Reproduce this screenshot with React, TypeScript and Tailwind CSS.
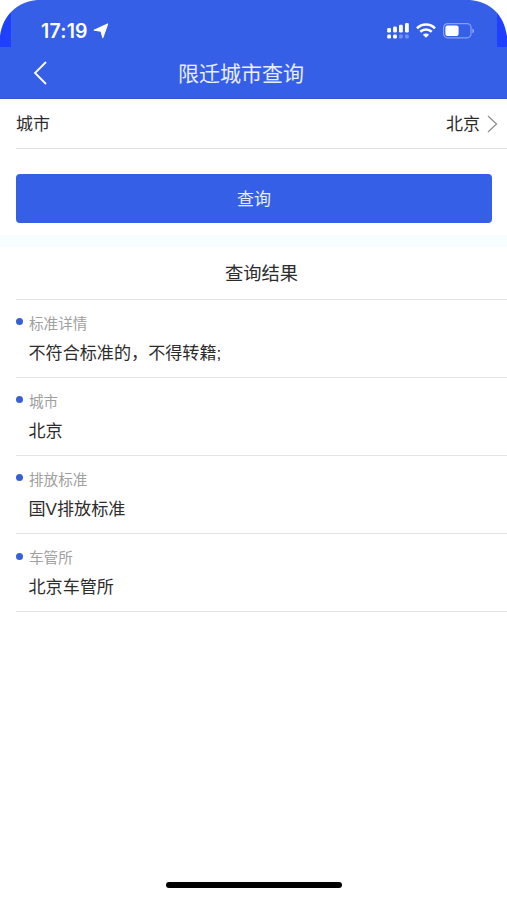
import React from 'react';

type Item = {
  label: string;
  value: string;
};

const results: Item[] = [
  { label: '标准详情', value: '不符合标准的，不得转籍;' },
  { label: '城市', value: '北京' },
  { label: '排放标准', value: '国V排放标准' },
  { label: '车管所', value: '北京车管所' },
];

function SignalIcon() {
  return (
    <svg width="22" height="16" viewBox="0 0 22 16" fill="white">
      <rect x="0.2" y="4.9" width="3.8" height="4.6" rx="1.3" />
      <rect x="6.1" y="3.6" width="3.8" height="5.9" rx="1.3" />
      <rect x="12" y="1.8" width="3.8" height="7.7" rx="1.3" />
      <rect x="18" y="0" width="3.8" height="9.5" rx="1.3" />
      <rect x="0.2" y="11.6" width="3.8" height="4" rx="1.3" />
      <rect x="6.1" y="11.6" width="3.8" height="4" rx="1.3" />
      <rect x="12" y="11.6" width="3.8" height="4" rx="1.3" opacity="0.3" />
      <rect x="18" y="11.6" width="3.8" height="4" rx="1.3" opacity="0.3" />
    </svg>
  );
}

function WifiIcon() {
  return (
    <svg width="20" height="15" viewBox="0 0 20 15" fill="none" stroke="white" strokeWidth="2.6">
      <path d="M1 5.3C6 .3 14 .3 19 5.3" />
      <path d="M4.3 8.8c3.2-3 8.2-3 11.4 0" />
      <path d="M10 14.8 6.9 11.7c1.8-1.6 4.4-1.6 6.2 0z" fill="white" stroke="none" />
    </svg>
  );
}

function BatteryIcon() {
  return (
    <svg width="32" height="16" viewBox="0 0 32 16">
      <rect x="0.6" y="0.6" width="27.4" height="14.2" rx="4" fill="none" stroke="white" strokeOpacity="0.4" strokeWidth="1.2" />
      <rect x="2.4" y="2.5" width="13.2" height="10.4" rx="2" fill="white" />
      <path d="M29.4 5.4c2.2.8 2.2 4 0 4.8z" fill="white" fillOpacity="0.45" />
    </svg>
  );
}

function Header() {
  return (
    <header className="relative h-[99px] shrink-0 border-b border-[#3153cf] bg-[#365fe8]">
      <svg className="absolute inset-0" width="507" height="47" viewBox="0 0 507 47">
        <path d="M0 0h11v47H0zM497 0h10v47h-10z" fill="#2040ff" />
        <path d="M0 0h37C17 2 3 15 0 36zM507 0h-37c21 2 34 15 37 36z" fill="white" />
      </svg>
      <div className="relative flex h-[47px] items-start justify-between pl-[41px] pr-[32px] text-white">
        <div className="flex items-center gap-[5px] pt-[19px]">
          <span className="font-['Inter'] text-[19.5px] leading-6 font-semibold tracking-[0.2px]">17:19</span>
          <svg
            width="16"
            height="16"
            viewBox="0 0 16 16"
            fill="white"
            stroke="white"
            strokeWidth="1.2"
            strokeLinejoin="round"
          >
            <path d="M14.6 1 9.8 14.6 8.1 8.2 1.2 7.2z" />
          </svg>
        </div>
        <div className="flex items-start pt-[22.5px]">
          <SignalIcon />
          <span className="ml-[7px]">
            <WifiIcon />
          </span>
          <span className="ml-[7px]">
            <BatteryIcon />
          </span>
        </div>
      </div>
      <div className="relative flex h-[51px] items-center">
        <button className="ml-[33px] w-[15px]">
          <svg width="15" height="24" viewBox="0 0 15 24" fill="none" stroke="white" strokeWidth="1.8">
            <path d="M13 1 2 12l11 11" />
          </svg>
        </button>
        <h1 className="ml-[130px] pt-[2px] text-[21px] leading-[30px] text-[#e8edff]">限迁城市查询</h1>
      </div>
    </header>
  );
}

export default function App() {
  return (
    <div className="flex h-[900px] w-[507px] flex-col overflow-hidden bg-white font-['Liberation_Sans','Noto_Sans_CJK_SC',sans-serif] text-[#2c2c2c]">
      <Header />
      <div className="ml-4 flex h-[50px] shrink-0 items-center justify-between border-b border-[#e0e0e0] pr-[9px] text-[17px]">
        <span className="pt-[3px]">城市</span>
        <div className="flex items-center gap-[7px]">
          <span className="pt-[3px]">北京</span>
          <svg width="11" height="18" viewBox="0 0 11 18" fill="none" stroke="#8c8c8c" strokeWidth="1.2">
            <path d="M1 1l8.5 8L1 17" />
          </svg>
        </div>
      </div>
      <button className="mt-[25px] mr-[15px] ml-4 h-[49px] shrink-0 rounded-[4px] bg-[#365fe8] pt-[2px] text-[17px] text-[#e8edff]">
        查询
      </button>
      <div className="mt-3 h-3 shrink-0 bg-[#f8fdff]" />
      <h2 className="ml-4 flex h-[52.5px] shrink-0 items-center justify-center border-b border-[#e4e4e4] pt-[2px] text-[18.3px]">
        查询结果
      </h2>
      <ul className="ml-4">
        {results.map((item) => (
          <li key={item.label} className="h-[78.2px] border-b border-[#e4e4e4] pt-[13px]">
            <div className="flex items-center text-[14.6px] leading-[22px] text-[#a0a0a0]">
              <span className="mr-[6px] mb-1 size-[7px] rounded-full bg-[#365fda]" />
              {item.label}
            </div>
            <div className="mt-[5px] pl-[12.5px] text-[17.1px] leading-7">{item.value}</div>
          </li>
        ))}
      </ul>
      <div className="mx-auto mt-auto mb-3 h-[6px] w-[176px] shrink-0 rounded-full bg-black" />
    </div>
  );
}
